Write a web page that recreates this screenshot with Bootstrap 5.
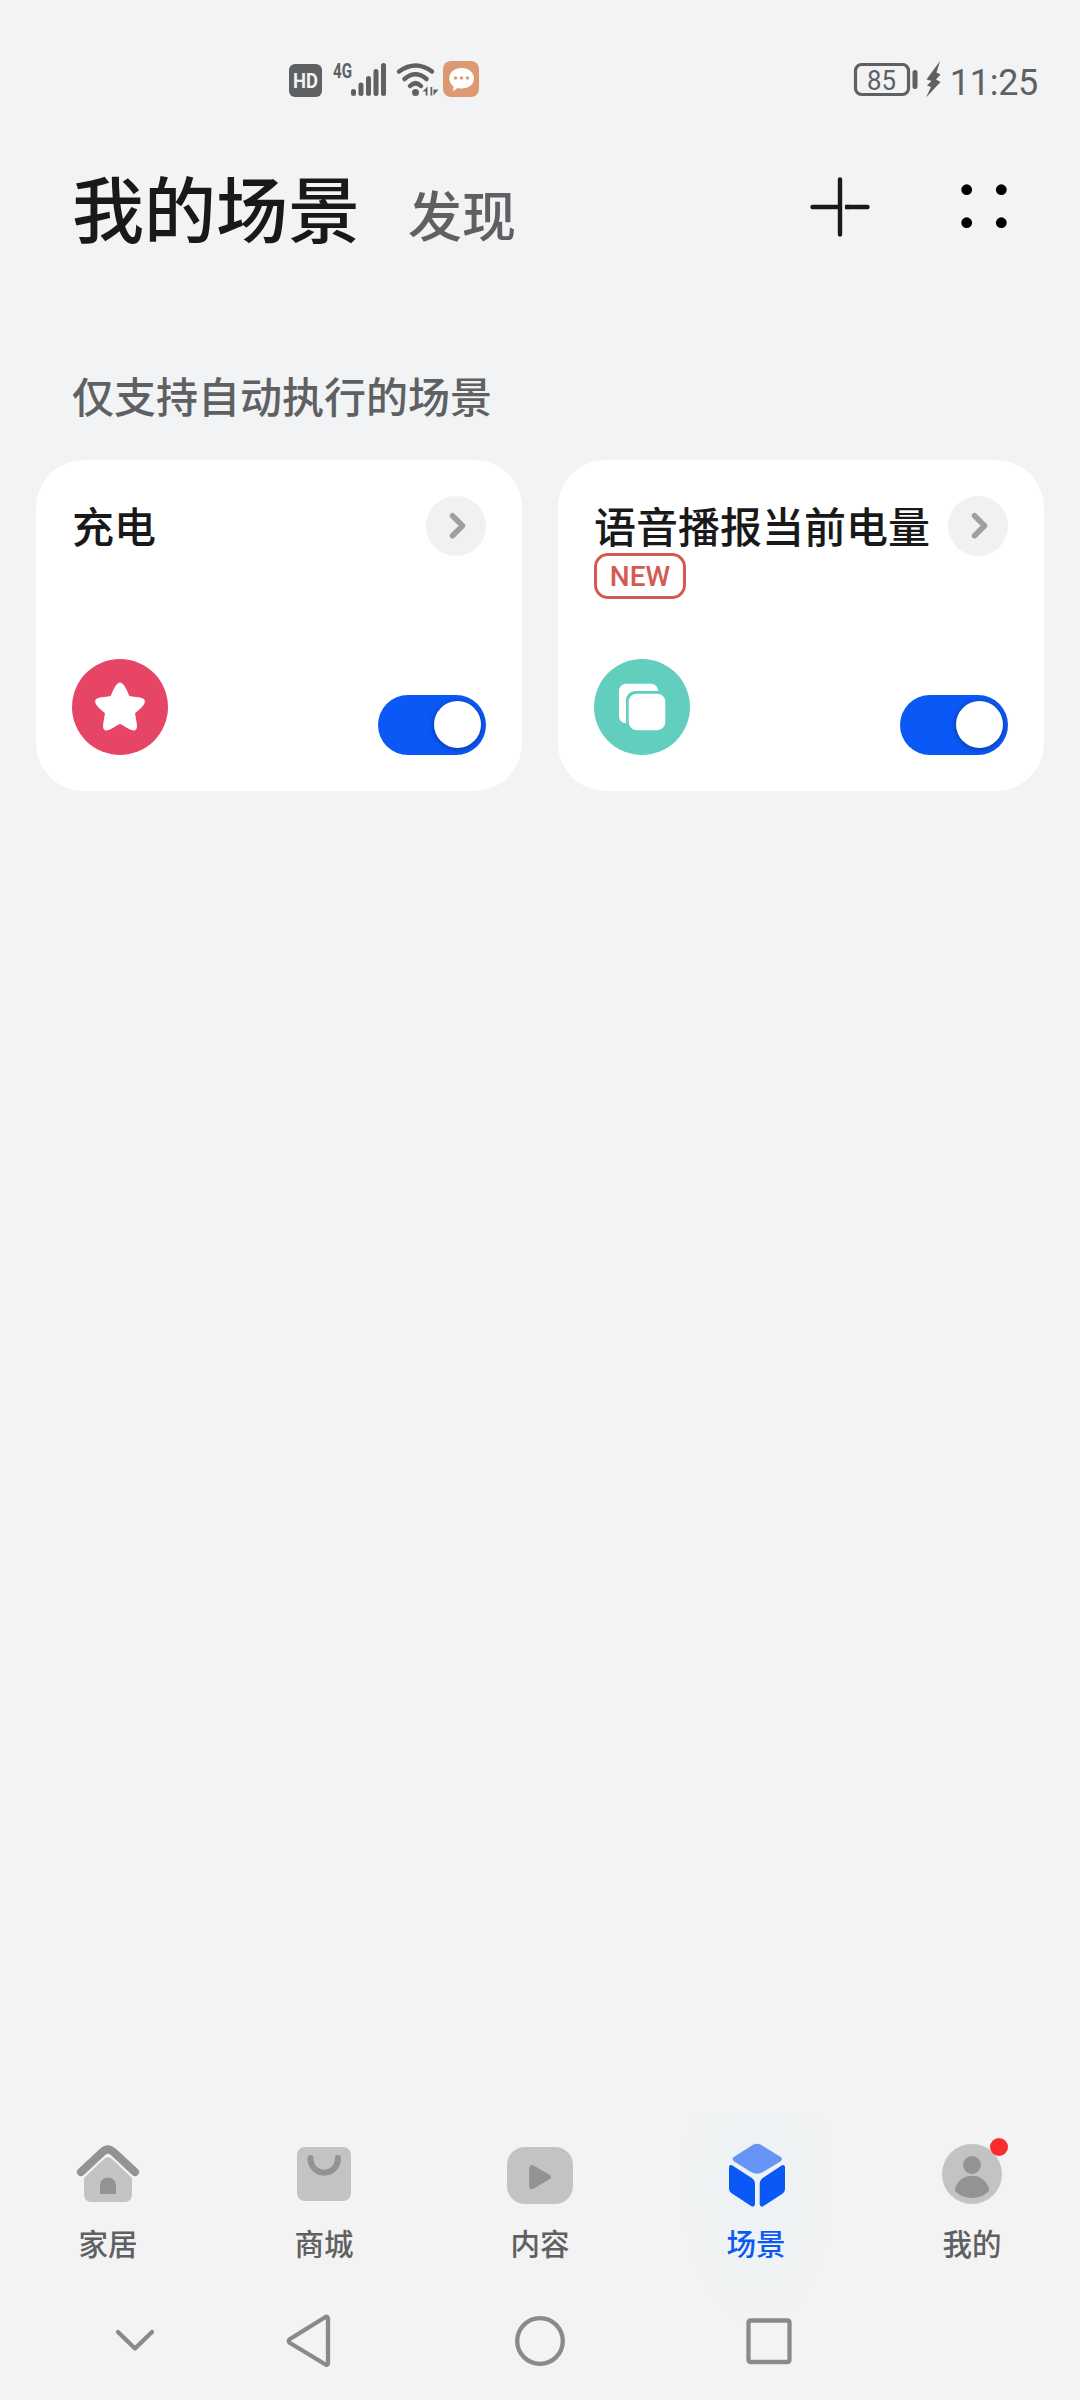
<!DOCTYPE html>
<html lang="zh-CN">
<head>
<meta charset="utf-8">
<meta name="viewport" content="width=device-width, initial-scale=1">
<title>我的场景</title>
<link rel="stylesheet" href="https://cdn.jsdelivr.net/npm/bootstrap@5.3.0/dist/css/bootstrap.min.css">
<style>
  body { background: #f1f3f5; font-family: "Noto Sans CJK SC", sans-serif; color: #191919; }
  .phone { width: 1080px; height: 2400px; }
  svg { display: block; flex: none; overflow: visible; }
  .status { height: 116px; padding: 61px 42px 0 289px; color: #5f6062; font-family: Roboto, sans-serif; }
  .status-clock { font-size: 36px; line-height: 36px; margin-left: 8px; letter-spacing: -.3px; }
  .page-head { height: 172px; padding: 48px 72px 0; }
  .page-actions { padding-top: 2px; }
  .tab-main { font-size: 72px; line-height: 84px; font-weight: 500; }
  .tab-side { font-size: 54px; line-height: 84px; font-weight: 500; margin-left: 48px; padding-top: 8px; color: #5f6062; }
  .group-label { height: 172px; padding: 77px 72px 0; font-size: 42px; line-height: 60px; font-weight: 500; color: #5f6062; }
  .scenes { padding: 0 36px; gap: 36px; }
  .scene { height: 331px; border: 0; border-radius: 48px; padding: 36px; }
  .scene-title { font-size: 42px; line-height: 58px; margin-bottom: 2px; font-weight: 500; white-space: nowrap; }
  .tag-new { width: 92px; height: 46px; border: 3px solid #d55a50; border-radius: 14px; color: #d55a50; font: 500 28px/41px Roboto, sans-serif; margin-top: -3px; }
  .go { width: 60px; height: 60px; background: #f1f1f1; flex: none; }
  .form-check-input.toggle { width: 108px; height: 60px; margin: 0; border: 0; border-radius: 30px; padding: 6px 5px; display: flex; justify-content: flex-end; }
  .form-check-input.toggle:checked { background: #0a59f7; }
  .toggle::before { content: ""; width: 47px; height: 47px; border-radius: 50%; background: #fff; box-shadow: 0 1px 5px 1px rgba(0,0,0,.3); }
  .dock { height: 286px; padding-top: 24px; background: radial-gradient(ellipse 92px 170px at 757px 70px, #eff2f5 0, #f0f3f4 50%, rgba(242,243,243,0) 100%), #f3f3f3; }
  .dock-tab { gap: 17px; font-size: 29.500px; line-height: 30px; font-weight: 500; color: #5f6062; }
  .dock-tab.current { color: #0a59f7; }
  .sysnav { height: 121px; }
</style>
<script src="https://cdn.jsdelivr.net/npm/bootstrap@5.3.0/dist/js/bootstrap.bundle.min.js"></script>
</head>
<body>
<div class="phone d-flex flex-column overflow-hidden">

  <div class="status d-flex justify-content-between align-items-start">
    <svg width="192" height="38" viewBox="0 0 192 38" fill="currentColor" font-family="Roboto, sans-serif">
      <rect x="0" y="3" width="33" height="33" rx="6"/>
      <text x="4" y="27" font-size="21" font-weight="700" fill="#f1f3f5" textLength="25" lengthAdjust="spacingAndGlyphs">HD</text>
      <text x="44" y="16.5" font-size="20" font-weight="700" textLength="19" lengthAdjust="spacingAndGlyphs">4G</text>
      <g stroke="currentColor" stroke-width="5" stroke-linecap="round">
        <path d="M64.500 30.500v2M72 24v8.500M79.500 17.500v15M87 10.500v22M94.500 4.500v28"/>
      </g>
      <g fill="none" stroke="currentColor" stroke-width="4.500" stroke-linecap="round">
        <path d="M110 10.500Q127 -1.500 143 10.500M115.500 18Q126.500 8.500 137.500 18M121 25Q126.500 19.500 132 25"/>
      </g>
      <circle cx="126.500" cy="31.500" r="3.500"/>
      <path d="M133.500 30.500l5-5v9h-1.800v-4zM141.500 26v8.500h1.800v-8.500zM144.500 28.500h5l-5 6z"/>
      <rect x="154" y="0" width="36" height="36" rx="8" fill="#dd9a72"/>
      <path d="M172.500 7c7.300 0 12.500 4.300 12.500 10.300s-5.200 10.300-12.500 10.300c-1.500 0-3-.2-4-.6l-4.300 3.600.3-5.300c-2.700-1.900-4.200-4.700-4.200-8 0-6 5-10.300 12.200-10.300z" fill="#fff"/>
      <g fill="#dd9a72"><circle cx="166.500" cy="17" r="1.700"/><circle cx="172.500" cy="17" r="1.700"/><circle cx="178.500" cy="17" r="1.700"/></g>
    </svg>
    <div class="d-flex">
      <svg width="88" height="38" viewBox="0 0 88 38" fill="currentColor">
        <rect x="1.500" y="3.500" width="53" height="30" rx="6" fill="none" stroke="currentColor" stroke-width="3.200"/>
        <rect x="58.500" y="9" width="5" height="19" rx="2.500"/>
        <text x="27.500" y="28.500" font-size="27" text-anchor="middle" textLength="29" lengthAdjust="spacingAndGlyphs">85</text>
        <path d="M86 0L72.500 18.500l5 1.500-4.500 4.500 4 1.500-5 10.500L86.500 21l-4.500-2.500 4.500-5-4-2z"/>
      </svg>
      <span class="status-clock pt-1">11:25</span>
    </div>
  </div>

  <div class="page-head d-flex justify-content-between align-items-start">
    <div class="d-flex">
      <span class="tab-main">我的场景</span>
      <span class="tab-side">发现</span>
    </div>
    <div class="page-actions d-flex">
      <svg width="60" height="84" viewBox="0 0 60 84" fill="none" stroke="#191919" stroke-width="4.400" stroke-linecap="round">
        <path d="M30 13.500v55M2.500 41h27.500"/><path d="M37 41h20.500"/><path d="M35 41h4" stroke-linecap="butt"/>
      </svg>
      <svg width="138" height="84" viewBox="0 0 138 84" fill="#000">
        <circle cx="96.700" cy="23.700" r="5.400"/><circle cx="131.300" cy="23.700" r="5.400"/><circle cx="96.700" cy="56.700" r="5.400"/><circle cx="131.300" cy="56.700" r="5.400"/>
      </svg>
    </div>
  </div>

  <div class="group-label">仅支持自动执行的场景</div>

  <div class="scenes row row-cols-2 g-0 flex-nowrap">
    <div class="card scene flex-fill justify-content-between">
      <div class="d-flex justify-content-between">
        <div class="scene-title">充电</div>
        <div class="go rounded-circle">
          <svg width="60" height="60" fill="none" stroke="#9f9f9f" stroke-width="5.500" stroke-linecap="round" stroke-linejoin="round"><path d="M26.500 19.700l10 10-10 10"/></svg>
        </div>
      </div>
      <div class="d-flex justify-content-between align-items-end">
        <svg width="96" height="96" viewBox="0 0 96 96">
          <circle cx="48" cy="48" r="48" fill="#e64566"/>
          <path fill="#fff" d="M44 26.300Q48 20.500 52 26.300C54.500 30 56 34 57.300 37C61 38 66 37.700 70 39Q75 41 71.500 46C69.500 49 66 51.500 63 54.300C63.500 58 64.500 62 65 66.500Q65 73 59.500 71C55.500 69.500 51.500 66.500 48 65C44.500 66.500 40.500 69.500 36.500 71Q31 73 31 66.500C31.500 62 32.500 58 33 54.300C30 51.500 26.500 49 24.500 46Q21 41 26 39C30 37.700 35 38 38.700 37C40 34 41.500 30 44 26.300Z"/>
        </svg>
        <input class="form-check-input toggle" type="checkbox" role="switch" checked aria-label="充电">
      </div>
    </div>
    <div class="card scene flex-fill justify-content-between">
      <div class="d-flex justify-content-between">
        <div>
          <div class="scene-title">语音播报当前电量</div>
          <div class="tag-new text-center">NEW</div>
        </div>
        <div class="go rounded-circle">
          <svg width="60" height="60" fill="none" stroke="#9f9f9f" stroke-width="5.500" stroke-linecap="round" stroke-linejoin="round"><path d="M26.500 19.700l10 10-10 10"/></svg>
        </div>
      </div>
      <div class="d-flex justify-content-between align-items-end">
        <svg width="96" height="96" viewBox="0 0 96 96">
          <circle cx="48" cy="48" r="48" fill="#62cfbe"/>
          <rect x="25" y="24.700" width="39" height="39.500" rx="7" fill="#fff"/>
          <path d="M66 32H41a9 9 0 0 0-9 9v24h8V40h26z" fill="#62cfbe"/>
          <rect x="34.700" y="34.700" width="36.600" height="36.500" rx="8" fill="#fff"/>
        </svg>
        <input class="form-check-input toggle" type="checkbox" role="switch" checked aria-label="语音播报当前电量">
      </div>
    </div>
  </div>

  <div class="dock mt-auto">
    <div class="row row-cols-5 g-0">
      <div class="dock-tab d-flex flex-column align-items-center">
        <svg width="72" height="72" viewBox="0 0 72 72">
          <path d="M12 40L32.500 20.500Q36 17.500 39.500 20.500L60 40V56Q60 64 52 64H20Q12 64 12 56Z" fill="#c3c3c3"/>
          <path d="M9 34L30.500 14Q36 9 41.500 14L63 34" fill="none" stroke="#939393" stroke-width="8" stroke-linecap="round"/>
          <path d="M28 56V47.500a8 8 0 0 1 16 0V56Z" fill="#939393"/>
        </svg>
        <span>家居</span>
      </div>
      <div class="dock-tab d-flex flex-column align-items-center">
        <svg width="72" height="72" viewBox="0 0 72 72">
          <rect x="9" y="9" width="54" height="54" rx="8" fill="#c3c3c3"/>
          <path d="M22.500 20v1a13.700 13.700 0 0 0 27.400 0v-1" fill="none" stroke="#939393" stroke-width="6" stroke-linecap="round"/>
        </svg>
        <span>商城</span>
      </div>
      <div class="dock-tab d-flex flex-column align-items-center">
        <svg width="72" height="72" viewBox="0 0 72 72">
          <rect x="3" y="9" width="66" height="57" rx="18" fill="#c3c3c3"/>
          <path d="M28 30V48.500L44 39Z" fill="#939393" stroke="#939393" stroke-width="5.500" stroke-linejoin="round"/>
        </svg>
        <span>内容</span>
      </div>
      <div class="dock-tab current d-flex flex-column align-items-center">
        <svg width="72" height="72" viewBox="0 0 72 72">
          <path d="M33 6.800Q37 4.800 41 6.800L60 18.500Q64 21 60 23.800L43 34Q37 37.500 31 34L14.500 23.800Q10.500 21 14.500 18.500Z" fill="#6695f7"/>
          <path d="M9 29Q9.200 26.300 12 27.200L31 39.500Q35 42 35 46V66.500Q34.500 69.500 31.500 68.300L12 55.500Q9 53.500 9 50Z" fill="#0a59f7"/>
          <path d="M65 29Q64.800 26.300 62 27.200L43.500 39.500Q39.700 42 39.700 46V66.500Q40.200 69.500 43.200 68.300L62 56Q65 54 65 50.500Z" fill="#0a59f7"/>
        </svg>
        <span>场景</span>
      </div>
      <div class="dock-tab d-flex flex-column align-items-center">
        <svg width="72" height="72" viewBox="0 0 72 72">
          <circle cx="36" cy="36" r="30" fill="#c3c3c3"/>
          <circle cx="36" cy="27" r="9" fill="#939393"/>
          <path d="M18.700 52C20 44 27 37.700 36 37.700S52 44 53.300 52C50 57 43 60 36 60S22 57 18.700 52Z" fill="#939393"/>
          <circle cx="63" cy="9" r="9" fill="#fc2b30"/>
        </svg>
        <span>我的</span>
      </div>
    </div>
    <svg class="sysnav" width="1080" height="121" viewBox="0 2257 1080 121" fill="none" stroke="#8a8a8a" stroke-width="4.300" stroke-linejoin="round" stroke-linecap="round">
      <path d="M118 2332l17 16.500 17-16.500"/>
      <path d="M328 2318.500v45q-.5 2-2.500 1L290 2343q-2.500-2 0-4L325.500 2317q2-1 2.500 1.500z"/>
      <circle cx="540" cy="2341" r="22.800"/>
      <rect x="748.500" y="2320.500" width="41" height="41.500" rx="2"/>
    </svg>
  </div>

</div>
</body>
</html>
